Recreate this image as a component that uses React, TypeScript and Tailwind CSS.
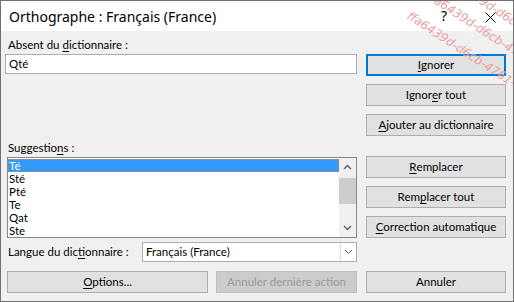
import type { ReactNode } from 'react';

const SUGGESTIONS = ['Té', 'Sté', 'Pté', 'Te', 'Qat', 'Ste'];

function Btn({ children, primary, disabled, className = '' }: { children: ReactNode; primary?: boolean; disabled?: boolean; className?: string }) {
  return (
    <button
      className={
        'h-[22px] flex items-center justify-center text-[11.5px] leading-none ' +
        (primary
          ? 'border-2 border-[#0078d7] bg-[#e1e1e1] text-black '
          : disabled
          ? 'border border-[#bfbfbf] bg-[#cccccc] text-[#9a9a9a] '
          : 'border border-[#adadad] bg-[#e1e1e1] text-black ') +
        className
      }
    >
      {children}
    </button>
  );
}

const U = ({ children }: { children: ReactNode }) => <span className="underline underline-offset-2">{children}</span>;

export default function App() {
  return (
    <div className="w-[514px] h-[302px] relative overflow-hidden border border-[#707070] bg-[#f0f0f0] font-['Lato',sans-serif] text-black text-[11.5px]">
      {/* title bar */}
      <div className="h-[30px] bg-white flex items-center pl-[8px] pr-[17px]">
        <span className="font-['Noto_Sans',sans-serif] text-[14px] leading-none mt-[1px]">Orthographe : Français (France)</span>
        <span className="ml-auto mr-[38px] font-['Noto_Sans',sans-serif] text-[14px] leading-none">?</span>
        <svg width="11" height="11" viewBox="0 0 11 11" className="mt-[2px]">
          <path d="M0.5 0.5 L10.5 10.5 M10.5 0.5 L0.5 10.5" stroke="#000" strokeWidth="1" />
        </svg>
      </div>

      <div className="flex pl-[4px] gap-[9px]">
        {/* left column */}
        <div className="w-[352px] flex flex-col">
          <div className="h-[16px] mt-[6px] ml-[3px] leading-[16px]">
            Absent du <U>d</U>ictionnaire :
          </div>
          <div className="mt-[1px] h-[20px] bg-white border border-[#acacac] flex items-center px-[3px]">Qté</div>

          <div className="h-[16px] mt-[66px] ml-[3px] leading-[16px]">
            Suggestio<U>n</U>s :
          </div>
          <div className="mt-[1px] ml-[2px] h-[81px] bg-white border border-[#828790] flex">
            <div className="flex-1 flex flex-col pt-[1px]">
              {SUGGESTIONS.map((s, i) => (
                <div
                  key={s}
                  className={
                    'h-[13px] leading-[13px] pl-[1px] ' +
                    (i === 0 ? 'bg-[#3399ff] text-white outline outline-1 outline-dotted outline-offset-[-1px] outline-[#c98a3a]' : '')
                  }
                >
                  {s}
                </div>
              ))}
            </div>
            <div className="w-[17px] bg-[#f0f0f0] flex flex-col items-center">
              <svg width="9" height="6" viewBox="0 0 9 6" className="mt-[6px]">
                <path d="M1 5 L4.5 1.5 L8 5" stroke="#606060" strokeWidth="1.4" fill="none" />
              </svg>
              <div className="mt-[8px] w-[17px] h-[26px] bg-[#cdcdcd]" />
              <svg width="9" height="6" viewBox="0 0 9 6" className="mt-auto mb-[6px]">
                <path d="M1 1 L4.5 4.5 L8 1" stroke="#606060" strokeWidth="1.4" fill="none" />
              </svg>
            </div>
          </div>

          <div className="mt-[4px] flex items-center h-[20px]">
            <span className="ml-[3px] w-[134px] whitespace-nowrap">
              Langue du dic<U>t</U>ionnaire :
            </span>
            <div className="flex-1 h-[20px] bg-white border border-[#acacac] flex items-center">
              <span className="pl-[3px] flex-1">Français (France)</span>
              <div className="w-[16px] h-full border-l border-[#dcdcdc] flex items-center justify-center">
                <svg width="9" height="6" viewBox="0 0 9 6">
                  <path d="M1 1 L4.5 4.5 L8 1" stroke="#606060" strokeWidth="1" fill="none" />
                </svg>
              </div>
            </div>
          </div>

          <div className="mt-[9px] flex gap-[8px] pl-[2px]">
            <Btn className="w-[201px]">
              <U>O</U>ptions...
            </Btn>
            <Btn disabled className="w-[141px]">
              Annuler dernière action
            </Btn>
          </div>
        </div>

        {/* right column */}
        <div className="w-[140px] flex flex-col">
          <Btn primary className="mt-[23px]">
            <U>I</U>gnorer
          </Btn>
          <Btn className="mt-[8px]">
            Ignor<U>e</U>r tout
          </Btn>
          <Btn className="mt-[8px]">
            <U>A</U>jouter au dictionnaire
          </Btn>
          <Btn className="mt-[20px]">
            <U>R</U>emplacer
          </Btn>
          <Btn className="mt-[8px]">
            Rem<U>p</U>lacer tout
          </Btn>
          <Btn className="mt-[8px]">
            <U>C</U>orrection automatique
          </Btn>
          <Btn className="mt-[33px]">Annuler</Btn>
        </div>
      </div>

      {/* watermark */}
      <div className="absolute inset-0 pointer-events-none font-['DejaVu_Sans',sans-serif] text-[12px] text-[#eaa2a2] italic">
        <div className="absolute left-[452px] top-[-30px] rotate-[33deg] origin-top-left whitespace-nowrap">ffa6439d-d6cb-4761-baa3-efdd3bd701c6</div>
        <div className="absolute left-[432px] top-[-14px] rotate-[33deg] origin-top-left whitespace-nowrap">ffa6439d-d6cb-4761-baa3-efdd3bd701c6</div>
        <div className="absolute left-[412px] top-[6px] rotate-[33deg] origin-top-left whitespace-nowrap">ffa6439d-d6cb-4761-baa3-efdd3bd701c6</div>
      </div>
    </div>
  );
}
